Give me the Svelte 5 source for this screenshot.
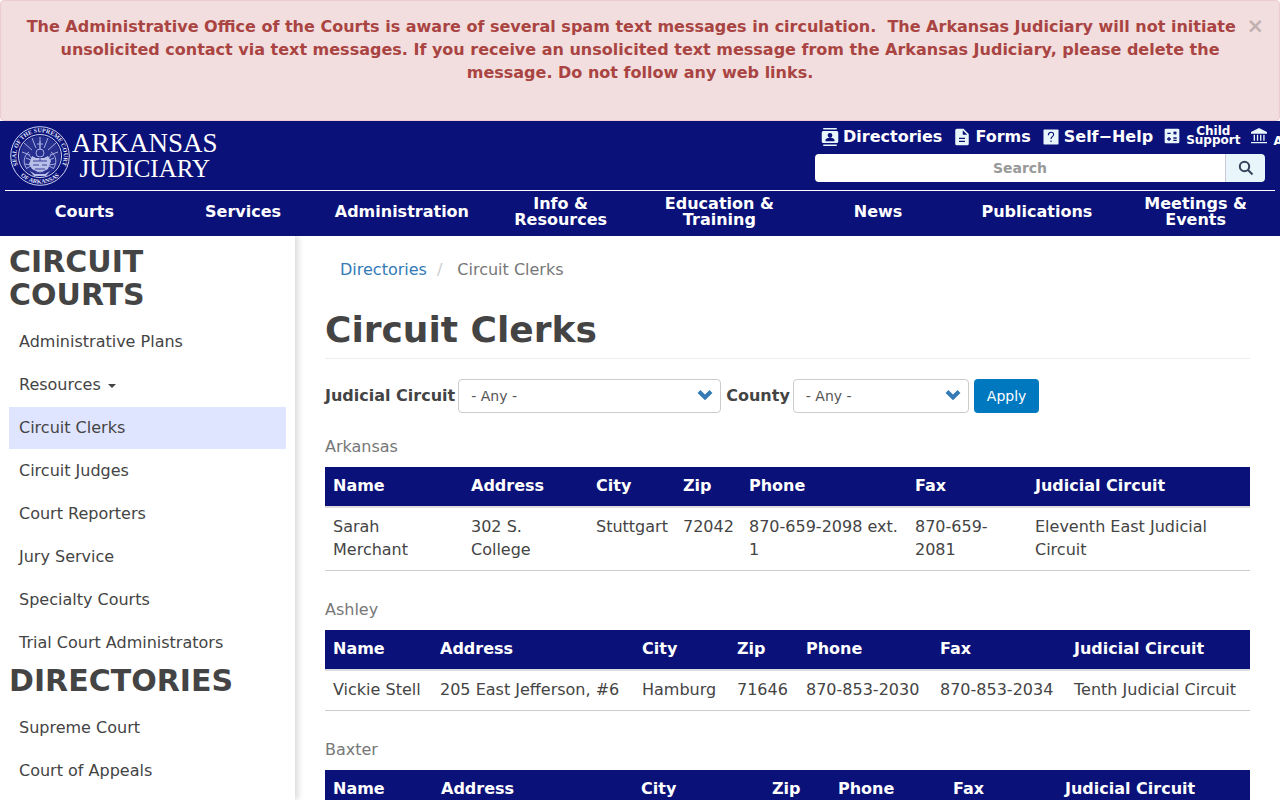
<script>
  const quickLinks = [
    { label: 'Directories', icon: 'contacts' },
    { label: 'Forms', icon: 'file' },
    { label: 'Self−Help', icon: 'help' },
    { label: 'Child Support', icon: 'calc', small: true },
    { label: 'A', icon: 'bank', small: true, cut: true },
  ];

  const nav = [
    'Courts', 'Services', 'Administration', 'Info & Resources',
    'Education & Training', 'News', 'Publications', 'Meetings & Events',
  ];

  const menus = [
    {
      title: 'Circuit Courts',
      items: [
        'Administrative Plans', 'Resources', 'Circuit Clerks', 'Circuit Judges',
        'Court Reporters', 'Jury Service', 'Specialty Courts', 'Trial Court Administrators',
      ],
    },
    { title: 'Directories', items: ['Supreme Court', 'Court of Appeals'] },
  ];

  const columns = ['Name', 'Address', 'City', 'Zip', 'Phone', 'Fax', 'Judicial Circuit'];

  // widths are relative shares of the table
  const counties = [
    {
      name: 'Arkansas',
      widths: [138, 125, 87, 66, 166, 120, 223],
      rows: [['Sarah Merchant', '302 S. College', 'Stuttgart', '72042', '870-659-2098 ext. 1', '870-659-2081', 'Eleventh East Judicial Circuit']],
    },
    {
      name: 'Ashley',
      widths: [107, 202, 95, 69, 134, 134, 184],
      rows: [['Vickie Stell', '205 East Jefferson, #6', 'Hamburg', '71646', '870-853-2030', '870-853-2034', 'Tenth Judicial Circuit']],
    },
    {
      name: 'Baxter',
      widths: [108, 200, 131, 66, 115, 112, 193],
      rows: [],
    },
  ];

  const share = (widths, w) => (w / widths.reduce((a, b) => a + b, 0)) * 100;

  let showAlert = $state(true);
  let search = $state('');
</script>

{#snippet icon(name)}
  <svg class="icon" viewBox="0 0 24 24" aria-hidden="true">
    {#if name === 'contacts'}
      <path d="M3 0h18v2H3zM3 22h18v2H3zM3 4h18a2 2 0 0 1 2 2v12a2 2 0 0 1-2 2H3a2 2 0 0 1-2-2V6a2 2 0 0 1 2-2zm9 2.500a3.200 3.200 0 1 0 0 6.400 3.200 3.200 0 0 0 0-6.400zM6 17.500h12v-1.200c0-2.300-4-3.300-6-3.300s-6 1-6 3.300z" fill-rule="evenodd" />
    {:else if name === 'file'}
      <path d="M14 1H5a2 2 0 0 0-2 2v18a2 2 0 0 0 2 2h14a2 2 0 0 0 2-2V8zM8 18.500V17h8v1.500zm0-4V13h8v1.500zm5-5.500V3l6 6z" fill-rule="evenodd" />
    {:else if name === 'help'}
      <rect x="2" y="2" width="20" height="20" rx="1" />
      <path class="ink thin" d="M8.500 9.500c0-5 7-5 7-1 0 3-3.500 3-3.500 6M12 16.500v2.200" />
    {:else if name === 'calc'}
      <rect x="1" y="1" width="22" height="22" rx="2" />
      <path class="ink" d="M5 8h5M14.500 5.500l4 4m0-4l-4 4M4.500 16.500h6m-3-3v6M14 15h5M14 18.500h5" />
    {:else if name === 'bank'}
      <path d="M12 0L0 6v2.500h24V6zM4 10h2v9H4zM8.800 10h2v9h-2zM13.600 10h2v9h-2zM18.400 10h2v9h-2zM0 21h24v2H0z" />
    {/if}
  </svg>
{/snippet}

{#if showAlert}
  <div class="alert" role="alert">
    <button class="close" aria-label="Close" onclick={() => (showAlert = false)}>×</button>
    <strong>The Administrative Office of the Courts is aware of several spam text messages in circulation.&nbsp; The Arkansas Judiciary will not initiate unsolicited contact via text messages. If you receive an unsolicited text message from the Arkansas Judiciary, please delete the message. Do not follow any web links.</strong>
  </div>
{/if}

<header>
  <div class="top">
    <a class="brand" href="#home">
      <svg class="seal" viewBox="0 0 60 60" aria-hidden="true">
        <defs>
          <path id="ring-top" d="M10 43A23.800 23.800 0 1 1 50 43" />
          <path id="ring-bottom" d="M10 49A27.600 27.600 0 0 0 50 49" />
        </defs>
        <circle cx="30" cy="30" r="29.300" class="ring" />
        <circle cx="30" cy="30" r="21.500" class="ring" />
        <circle cx="30" cy="30" r="20" class="disc" />
        <text><textPath href="#ring-top" startOffset="50%">SEAL OF THE SUPREME COURT</textPath></text>
        <text><textPath href="#ring-bottom" startOffset="50%">OF ARKANSAS</textPath></text>
        <path class="rays" d="M30 23V11M26 22l-4-10M34 22l4-10M22 24l-8-7M38 24l8-7M20 29l-8-3M40 29l8-3" />
        <path class="rays" d="M30 15v9M27 18h6M19 26c-6 4-6 12-2 17M41 26c6 4 6 12 2 17M16 32l5 2M44 32l-5 2M15 38l6 1M45 38l-6 1M18 28l5 6M42 28l-5 6M17 42l6-3M43 42l-6-3" />
        <circle cx="30" cy="27" r="4" class="rays" />
        <path class="light" d="M22 30l4 2h8l4-2 3 5-3 8-8 4-8-4-3-5zM20 45l5 3h10l5-3-4 5H24z" />
        <path class="shade" d="M23 35h14M23 39h6M32 39h5M25 43h10M30 31v4M26 47l4-1 4 1" />
      </svg>
      <span class="wordmark">
        <span>ARKANSAS</span>
        <span class="second">JUDICIARY</span>
      </span>
    </a>
    <div class="tools">
      <ul class="quick">
        {#each quickLinks as link}
          <li>
            <a href="#{link.icon}" class:small={link.small} class:cut={link.cut}>
              {@render icon(link.icon)}
              <span>{link.label}</span>
            </a>
          </li>
        {/each}
      </ul>
      <form class="search" onsubmit={(e) => e.preventDefault()}>
        <input type="text" placeholder="Search" aria-label="Search" bind:value={search} />
        <button aria-label="Submit search">
          <svg viewBox="0 0 16 16" aria-hidden="true">
            <circle cx="6.500" cy="6.500" r="4.700" />
            <path d="M10 10l4.500 4.500" />
          </svg>
        </button>
      </form>
    </div>
  </div>
  <nav class="main-nav">
    {#each nav as item}
      <a href="#nav"><span>{item}</span></a>
    {/each}
  </nav>
</header>

<div class="page">
  <aside>
    {#each menus as menu}
      <h2>{menu.title}</h2>
      <ul>
        {#each menu.items as item}
          <li>
            <a href="#menu" class:active={item === 'Circuit Clerks'}>
              {item}{#if item === 'Resources'}<i class="caret"></i>{/if}
            </a>
          </li>
        {/each}
      </ul>
    {/each}
  </aside>

  <main>
    <ol class="breadcrumb">
      <li><a href="#directories">Directories</a></li>
      <li>Circuit Clerks</li>
    </ol>
    <h1>Circuit Clerks</h1>

    <form class="filters" onsubmit={(e) => e.preventDefault()}>
      <label for="circuit">Judicial Circuit</label>
      <div class="select circuit">
        <select id="circuit"><option>- Any -</option></select>
        <svg viewBox="0 0 16 12" aria-hidden="true"><path d="M2 2.500l6 6 6-6" /></svg>
      </div>
      <label for="county">County</label>
      <div class="select county">
        <select id="county"><option>- Any -</option></select>
        <svg viewBox="0 0 16 12" aria-hidden="true"><path d="M2 2.500l6 6 6-6" /></svg>
      </div>
      <button>Apply</button>
    </form>

    {#each counties as county}
      <table>
        <caption>{county.name}</caption>
        <colgroup>
          {#each county.widths as w}
            <col style="width: {share(county.widths, w)}%" />
          {/each}
        </colgroup>
        <thead>
          <tr>
            {#each columns as col}<th scope="col">{col}</th>{/each}
          </tr>
        </thead>
        <tbody>
          {#each county.rows as row}
            <tr>
              {#each row as cell}<td>{cell}</td>{/each}
            </tr>
          {/each}
        </tbody>
      </table>
    {/each}
  </main>
</div>

<style>
  :global(body) {
    font: 16px/23px 'DejaVu Sans', Verdana, sans-serif;
    color: #444;
    background: #fff;
    overflow: hidden;
  }

  :global(#app *) {
    box-sizing: border-box;
  }

  a {
    text-decoration: none;
  }

  ul, ol {
    list-style: none;
    margin: 0;
    padding: 0;
  }

  button, input, select {
    font-family: inherit;
  }

  .alert {
    padding: 14px 15px 36px;
    border: 1px solid #ebccd1;
    border-radius: 4px;
    background: #f2dede;
    color: #a94442;
    text-align: center;
  }

  .close {
    float: right;
    padding: 1px 0 0;
    border: 0;
    background: none;
    color: #000;
    font-size: 21px;
    font-weight: bold;
    line-height: 21px;
    opacity: 0.2;
  }

  header {
    padding: 0 5px;
    background: #0a1179;
    overflow: hidden;
  }

  .top {
    display: flex;
    justify-content: space-between;
    height: 70px;
    border-bottom: 1px solid #fff;
  }

  .brand {
    display: flex;
    gap: 2px;
    padding: 5px;
    color: #fff;
  }

  .seal {
    width: 60px;
    height: 60px;
  }

  .seal text {
    font: bold 6px 'Liberation Serif', serif;
    fill: #e6eaff;
    text-anchor: middle;
  }

  .ring {
    fill: none;
    stroke: #cdd3f2;
  }

  .disc {
    fill: #28308f;
  }

  .rays {
    fill: none;
    stroke: #a4abdf;
  }

  .light {
    fill: #b9c0e8;
  }

  .shade {
    fill: none;
    stroke: #39419b;
  }

  .wordmark {
    display: flex;
    flex-direction: column;
    align-items: center;
    padding-top: 4px;
    font: 27px/26px 'Liberation Serif', serif;
  }

  .second {
    font-size: 25px;
  }

  .tools {
    width: 460px;
    padding: 4px 10px 0 0;
  }

  .quick {
    display: flex;
    gap: 11px;
    height: 24px;
    padding-left: 6px;
    white-space: nowrap;
  }

  .quick a {
    display: flex;
    align-items: center;
    gap: 4px;
    height: 23px;
    color: #fff;
    font-weight: bold;
  }

  .icon {
    flex: none;
    width: 18px;
    height: 18px;
    fill: #e8f6fc;
  }

  .small .icon {
    width: 16px;
    height: 16px;
  }

  .ink {
    fill: none;
    stroke: #0a1179;
    stroke-width: 2;
  }

  .thin {
    stroke-width: 1.5;
  }

  .quick .small {
    gap: 6px;
    height: 21px;
    font-size: 12px;
    line-height: 9px;
    text-align: center;
    white-space: normal;
  }

  .small span {
    width: min-content;
  }

  .cut span {
    align-self: flex-end;
  }

  .search {
    display: flex;
    height: 28px;
    margin-top: 5px;
  }

  .search input {
    flex: 1;
    min-width: 0;
    border: 0;
    border-radius: 4px 0 0 4px;
    font-size: 14px;
    font-weight: bold;
    text-align: center;
  }

  .search input::placeholder {
    color: #999;
  }

  .search button {
    display: grid;
    place-items: center;
    width: 40px;
    padding: 0;
    border: 0;
    border-left: 1px solid #ccd;
    border-radius: 0 4px 4px 0;
    background: #e8f6fc;
  }

  .search svg {
    width: 16px;
    height: 16px;
    fill: none;
    stroke: #344357;
    stroke-width: 2;
  }

  .main-nav {
    display: grid;
    grid-template-columns: repeat(8, minmax(0, 1fr));
    height: 45px;
  }

  .main-nav a {
    display: grid;
    place-items: center;
    padding: 0 10px 4px;
    color: #fff;
    font-weight: bold;
    line-height: 16px;
    text-align: center;
  }

  .page {
    display: flex;
    align-items: stretch;
    height: calc(100vh - 236px);
    overflow: hidden;
  }

  aside {
    flex: none;
    width: 295px;
    padding: 9px 9px 0;
    box-shadow: 3px 0 6px rgba(0, 0, 0, 0.15);
  }

  h2 {
    margin: 0 0 10px;
    color: #444;
    font-size: 30px;
    line-height: 33px;
    text-transform: uppercase;
  }

  aside ul {
    display: flex;
    flex-direction: column;
    gap: 1px;
  }

  aside a {
    display: block;
    padding: 9px 10px 10px;
    color: #444;
  }

  aside .active {
    background: #e0e5ff;
  }

  .caret {
    display: inline-block;
    margin-left: 7px;
    border: 4px solid transparent;
    border-top-color: #444;
    border-bottom: 0;
    vertical-align: middle;
  }

  main {
    flex: 1;
    padding: 14px 30px 0;
  }

  .breadcrumb {
    display: flex;
    padding: 8px 15px;
    color: #777;
  }

  .breadcrumb a {
    color: #337ab7;
  }

  .breadcrumb li + li::before {
    content: '/';
    padding: 0 15px 0 10px;
    color: #ccc;
  }

  h1 {
    margin: 21px 0 20px;
    padding-bottom: 8px;
    border-bottom: 1px solid #eee;
    color: #444;
    font-size: 36px;
    line-height: 40px;
  }

  .filters {
    display: flex;
    align-items: center;
    gap: 5px;
    margin-bottom: 15px;
  }

  .filters label {
    margin-right: -2px;
    padding-bottom: 2px;
    font-weight: bold;
  }

  .select {
    display: grid;
    align-items: center;
  }

  .circuit {
    width: 263px;
  }

  .county {
    width: 176px;
  }

  .select > * {
    grid-area: 1 / 1;
  }

  .select select {
    width: 100%;
    height: 34px;
    padding: 6px 12px;
    border: 1px solid #ccc;
    border-radius: 4px;
    background: #fff;
    color: #555;
    font-size: 14px;
    appearance: none;
  }

  .select svg {
    justify-self: end;
    width: 16px;
    height: 12px;
    margin: 0 8px 2px 0;
    fill: none;
    stroke: #337ab7;
    stroke-width: 4;
    pointer-events: none;
  }

  .filters button {
    height: 34px;
    padding: 0 13px;
    border: 0;
    border-radius: 4px;
    background: #0078bf;
    color: #fff;
    font-size: 14px;
  }

  table {
    width: 100%;
    margin-bottom: 20px;
    border-collapse: collapse;
    table-layout: fixed;
  }

  caption {
    padding: 7px 0 9px;
    color: #777;
    text-align: left;
  }

  th {
    padding: 7px 8px 9px;
    border-bottom: 2px solid #ddd;
    background: #0a1179;
    color: #fff;
    text-align: left;
  }

  td {
    padding: 7px 8px 9px;
    border-bottom: 1px solid #ccc;
    vertical-align: top;
  }
</style>
